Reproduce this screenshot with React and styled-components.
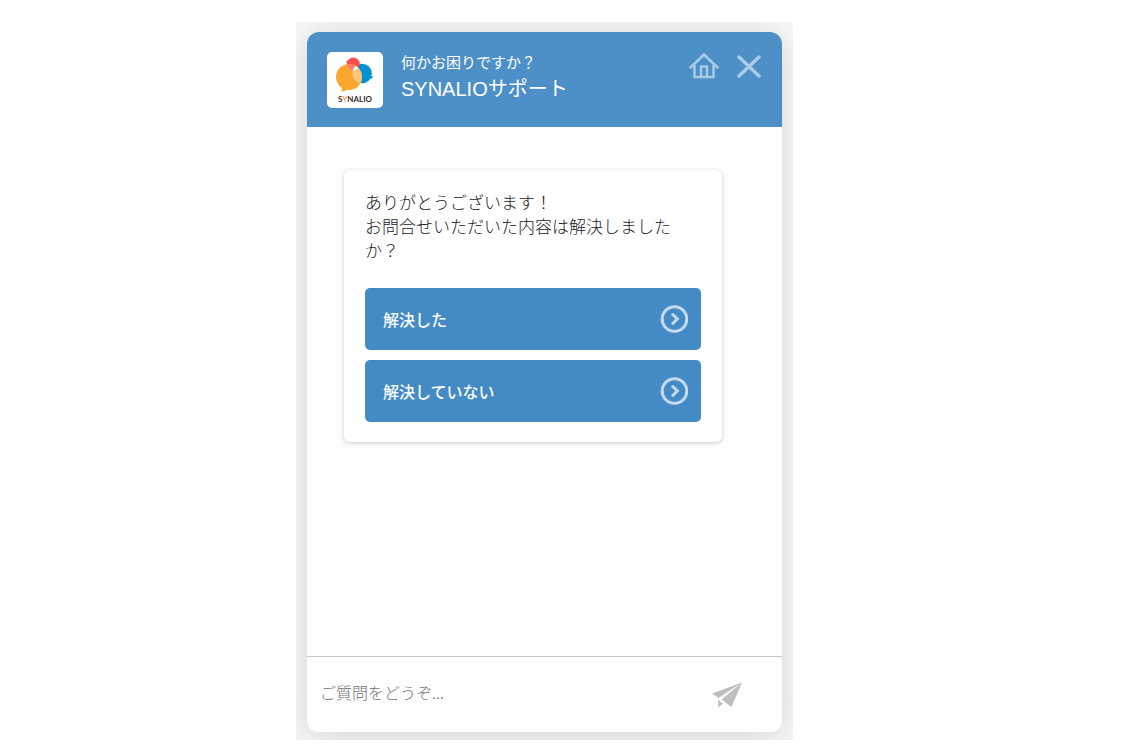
import React, { useState } from "react";
import styled, { createGlobalStyle } from "styled-components";

const GlobalStyle = createGlobalStyle`
  *, *::before, *::after {
    box-sizing: border-box;
  }
  body {
    margin: 0;
    background: #fff;
    font-family: "Noto Sans CJK JP", sans-serif;
  }
  button, input {
    font-family: inherit;
  }
`;

const Logo = () => (
  <svg width="56" height="56" viewBox="0 0 56 56" role="img" aria-label="SYNALIO">
    <defs>
      <clipPath id="orange">
        <circle cx="22" cy="25" r="13" />
      </clipPath>
      <clipPath id="blue">
        <circle cx="35" cy="21.5" r="9.8" />
      </clipPath>
    </defs>
    <circle cx="35" cy="21.5" r="9.8" fill="#0090d4" />
    <path d="M43 24l3.500.5-3 3z" fill="#0090d4" />
    <circle cx="26.300" cy="12" r="6.500" fill="#f9504e" />
    <path d="M22 8.500l-3 .5 2 3z" fill="#f9504e" />
    <circle cx="22" cy="25" r="13" fill="#fba72d" />
    <path d="M15 34.500c0 2 0 3.500-1 4.800 3 0 5-.8 7-2.300z" fill="#fba72d" />
    <g clipPath="url(#orange)">
      <circle cx="35" cy="21.500" r="9.800" fill="#fdc57c" />
      <circle cx="26.300" cy="12" r="6.500" fill="#fb7d70" />
      <g clipPath="url(#blue)">
        <circle cx="26.300" cy="12" r="6.500" fill="#fff" />
      </g>
    </g>
    <text
      x="28"
      y="50"
      textAnchor="middle"
      fontFamily="Lato, sans-serif"
      fontSize="8"
      fontWeight="700"
      fill="#3a2c2c"
    >
      S<tspan fill="#f5a04a">Y</tspan>NALIO
    </text>
  </svg>
);

const HomeIcon = () => (
  <svg width="30" height="28" viewBox="0 0 30 28" fill="none" stroke="currentColor" strokeWidth="2.500">
    <path d="M1.500 15.500L15 2.500l13.500 13" strokeLinecap="round" />
    <path d="M5.500 13v12h19V13" />
    <path d="M12 25V14.500h6V25" />
  </svg>
);

const CloseIcon = () => (
  <svg width="26" height="28" viewBox="0 0 26 28" stroke="currentColor" strokeWidth="3.500" strokeLinecap="round">
    <path d="M3 5l20 19M23 5L3 24" />
  </svg>
);

const ArrowIcon = () => (
  <svg width="28" height="28" viewBox="0 0 28 28" fill="none" stroke="currentColor" strokeWidth="3">
    <circle cx="14.500" cy="14" r="12.300" />
    <path d="M12 8.800l5.300 5.200-5.300 5.200" />
  </svg>
);

const SendIcon = () => (
  <svg width="32" height="28" viewBox="0 0 32 28" fill="currentColor">
    <path d="M31 1.500L1 12.500 7.500 17z" />
    <path d="M31 1.500L10.500 18.500 20.500 26z" />
    <path d="M7 19l5 3.500-4.500 4z" />
  </svg>
);

const choices = ["解決した", "解決していない"];

export default function App() {
  const [question, setQuestion] = useState("");

  return (
    <>
      <GlobalStyle />
      <Page>
        <Stage>
          <Chat>
            <Header>
              <Avatar>
                <Logo />
              </Avatar>
              <Heading>
                <Lead>何かお困りですか？</Lead>
                <Title>SYNALIOサポート</Title>
              </Heading>
              <Actions>
                <IconButton type="button" aria-label="ホーム">
                  <HomeIcon />
                </IconButton>
                <IconButton type="button" aria-label="閉じる">
                  <CloseIcon />
                </IconButton>
              </Actions>
            </Header>
            <Body>
              <Card>
                <Message>
                  ありがとうございます！
                  <br />
                  お問合せいただいた内容は解決しました
                  <br />
                  か？
                </Message>
                <Choices>
                  {choices.map((choice) => (
                    <Choice key={choice} type="button">
                      {choice}
                      <ArrowIcon />
                    </Choice>
                  ))}
                </Choices>
              </Card>
            </Body>
            <Footer onSubmit={(e) => e.preventDefault()}>
              <Question
                aria-label="ご質問"
                placeholder="ご質問をどうぞ..."
                value={question}
                onChange={(e) => setQuestion(e.target.value)}
              />
              <SendButton type="submit" aria-label="送信">
                <SendIcon />
              </SendButton>
            </Footer>
          </Chat>
        </Stage>
      </Page>
    </>
  );
}

const Page = styled.div`
  display: grid;
  grid-template-columns: 296fr 497fr 343fr;
  min-height: 100vh;
  padding: 22px 0 12px;
`;

const Stage = styled.main`
  grid-column: 2;
  display: flex;
  padding: 10px 11px 8px;
  background: #f7f7f7;
  overflow: hidden;
`;

const Chat = styled.section`
  flex: 1;
  display: flex;
  flex-direction: column;
  min-width: 0;
  border-radius: 12px;
  background: #fdfdfd;
  box-shadow: 0 4px 32px rgba(0, 0, 0, 0.14);
  overflow: hidden;
`;

const Header = styled.header`
  display: flex;
  align-items: flex-start;
  padding: 20px 20px 19px;
  background: #4d90c7;
  color: #fff;
`;

const Avatar = styled.div`
  width: 56px;
  height: 56px;
  margin-right: 18px;
  border-radius: 5px;
  background: #fff;
`;

const Heading = styled.div`
  flex: 1;
`;

const Lead = styled.p`
  margin: 0;
  font-size: 15px;
  line-height: 20px;
`;

const Title = styled.h1`
  margin: 0;
  font-family: "Liberation Sans", "Noto Sans CJK JP", sans-serif;
  font-size: 20px;
  font-weight: 400;
  line-height: 34px;
`;

const Actions = styled.div`
  display: flex;
  gap: 17px;
`;

const IconButton = styled.button`
  display: flex;
  padding: 0;
  border: 0;
  background: none;
  color: #aacbe5;
  cursor: pointer;
`;

const Body = styled.div`
  flex: 1;
  padding: 43px 60px 43px 37px;
`;

const Card = styled.div`
  padding: 20px 21px;
  border-radius: 6px;
  background: #fff;
  box-shadow: 0 1px 4px rgba(0, 0, 0, 0.2);
`;

const Message = styled.p`
  margin: 0 0 26px;
  color: #222;
  font-size: 17px;
  font-weight: 300;
  line-height: 24px;
`;

const Choices = styled.div`
  display: flex;
  flex-direction: column;
  gap: 10px;
`;

const Choice = styled.button`
  display: flex;
  align-items: center;
  justify-content: space-between;
  height: 62px;
  padding: 0 13px 0 18px;
  border: 0;
  border-radius: 5px;
  background: #448bc5;
  color: #fff;
  font-size: 16px;
  font-weight: 500;
  cursor: pointer;

  svg {
    color: #c5dbed;
  }
`;

const Footer = styled.form`
  display: flex;
  align-items: center;
  height: 76px;
  padding: 0 39px 0 13px;
  border-top: 1px solid #c8c8c8;
  background: #fefefe;
`;

const Question = styled.input`
  flex: 1;
  min-width: 0;
  height: 40px;
  padding: 0 0 6px;
  border: 0;
  outline: 0;
  background: none;
  color: #333;
  font-size: 16px;
  font-weight: 300;

  &::placeholder {
    color: #757575;
  }
`;

const SendButton = styled(IconButton)`
  color: #bebebe;
`;
